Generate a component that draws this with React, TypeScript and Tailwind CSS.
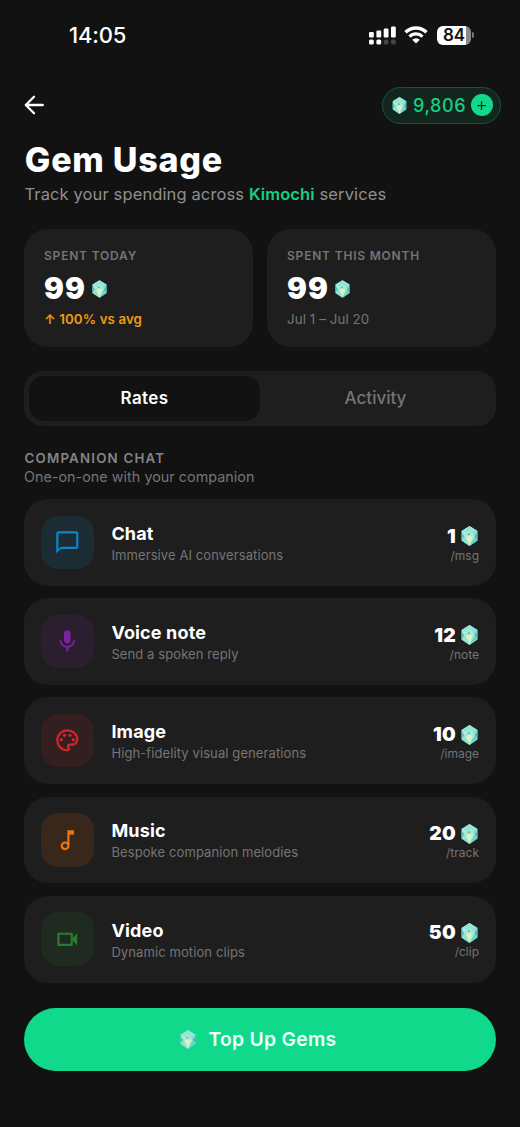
import React from 'react';
import {
  MdAdd,
  MdChatBubbleOutline,
  MdMic,
  MdOutlineMusicNote,
  MdOutlinePalette,
  MdOutlineVideocam,
} from 'react-icons/md';

const rates = [
  { name: 'Chat', desc: 'Immersive AI conversations', price: 1, unit: '/msg', icon: MdChatBubbleOutline, tile: 'bg-[#1b2c35] text-[#0d86c8]' },
  { name: 'Voice note', desc: 'Send a spoken reply', price: 12, unit: '/note', icon: MdMic, tile: 'bg-[#2a1e2f] text-[#7d20a3]' },
  { name: 'Image', desc: 'High-fidelity visual generations', price: 10, unit: '/image', icon: MdOutlinePalette, tile: 'bg-[#341f20] text-[#d0272c]' },
  { name: 'Music', desc: 'Bespoke companion melodies', price: 20, unit: '/track', icon: MdOutlineMusicNote, tile: 'bg-[#38271a] text-[#ec7509]' },
  { name: 'Video', desc: 'Dynamic motion clips', price: 50, unit: '/clip', icon: MdOutlineVideocam, tile: 'bg-[#1f2a20] text-[#2b7a30]' },
];

function Gem({ className }: { className: string }) {
  return (
    <svg viewBox="0 0 34 40" className={`shrink-0 ${className}`}>
      <path d="M17 0 33 10V29L17 40 1 29V10Z" fill="#7fdccd" />
      <path d="M17 0 33 10 24 14 17 8 10 14 1 10Z" fill="#93e6d8" />
      <path d="M1 10 10 14 7 21Z" fill="#b3efe3" />
      <path d="M33 10 24 14 27 21Z" fill="#7fe0da" />
      <path d="M1 13 7 21 1 27Z" fill="#5fbfb3" />
      <path d="M33 13 27 21 33 27Z" fill="#4fb0b0" />
      <path d="M1 29 7 21 17 40Z" fill="#8ce5d1" />
      <path d="M33 29 27 21 17 40Z" fill="#6ad4c6" />
      <path d="M17 8 24 14 27 21 17 40 7 21 10 14Z" fill="#a6e9d5" />
      <path d="M10 23 17 19 23 23 17 38Z" fill="#def0c4" />
      <path d="M13 18 16 13 18 18Z" fill="#6fa69a" />
    </svg>
  );
}

function StatusBar() {
  return (
    <div className="flex h-[70px] items-center justify-between pl-[69px] pr-[46px]">
      <span className="text-[22px] font-medium tracking-[-0.2px]">14:05</span>
      <div className="flex items-center gap-2">
        <svg width="27" height="19" viewBox="0 0 27 19" fill="#fff">
          <rect x="0" y="6" width="4.8" height="5.5" rx="1.2" />
          <rect x="7.4" y="4.5" width="4.8" height="7" rx="1.2" />
          <rect x="14.7" y="2.5" width="4.8" height="9" rx="1.2" />
          <rect x="22" y="0.5" width="4.8" height="11" rx="1.2" />
          <rect x="0" y="13.5" width="4.8" height="5" rx="1.5" />
          <rect x="7.4" y="13.5" width="4.8" height="5" rx="1.5" />
          <rect x="14.7" y="13.5" width="4.8" height="5" rx="1.5" fill="#464646" />
          <rect x="22" y="13.5" width="4.8" height="5" rx="1.5" fill="#464646" />
        </svg>
        <svg width="24" height="18" viewBox="0 0 24 18" fill="none" stroke="#fff">
          <path d="M1.5 6.3a15 15 0 0 1 21 0" strokeWidth="3.4" />
          <path d="M5.5 10.6a9.3 9.3 0 0 1 13 0" strokeWidth="3.2" />
          <path d="M12 17.6 8.2 13.8a5.5 5.5 0 0 1 7.6 0Z" fill="#fff" stroke="none" />
        </svg>
        <div className="ml-[1px] flex items-center gap-[1px]">
          <div className="flex h-[19px] w-[34px] items-center justify-center rounded-[6px] bg-[linear-gradient(90deg,#fff_84%,#8a8a8a_84%)] text-[17px] font-semibold leading-none text-[#121212]">
            84
          </div>
          <div className="h-[6px] w-[2px] rounded-r-full bg-[#777]" />
        </div>
      </div>
    </div>
  );
}

function Header() {
  return (
    <div className="mt-[16.5px] flex h-[37px] items-center justify-between pl-6 pr-[19.5px]">
      <svg width="21" height="20" viewBox="0 0 21 20" fill="none" stroke="#fff" strokeWidth="2.3" strokeLinecap="round" strokeLinejoin="round">
        <path d="M18.8 10H1.8M10 1.8 1.8 10l8.2 8.2" />
      </svg>
      <div className="flex h-[37px] w-[118.5px] items-center rounded-full border-[1.5px] border-[#14553d] bg-[#12261e] pl-[9px] pr-[7px]">
        <Gem className="h-[17px] w-[15px]" />
        <span className="ml-[6px] flex-1 text-[18px] font-medium tracking-[0.6px] text-[#17cf83]">9,806</span>
        <span className="flex size-[22px] items-center justify-center rounded-full bg-[#10d98b]">
          <MdAdd className="size-[15px] text-[#123325]" />
        </span>
      </div>
    </div>
  );
}

export default function App() {
  return (
    <div className="h-[1127px] w-[520px] overflow-hidden bg-[#121212] font-[Inter,sans-serif] text-white">
      <StatusBar />
      <Header />

      <main className="px-6">
        <h1 className="mt-[15.5px] pl-[0.8px] text-[34px] font-extrabold leading-[42px] tracking-[0.75px]">Gem Usage</h1>
        <p className="mt-[1.5px] pl-[0.5px] text-[16.5px] leading-[22px] tracking-[0.12px] text-[#8f8f8f]">
          Track your spending across <span className="font-semibold text-[#17cf83]">Kimochi</span> services
        </p>

        {/* Spending summary */}
        <div className="mt-6 grid grid-cols-2 gap-[14px]">
          <div className="h-[118.5px] rounded-3xl bg-[#1e1e1e] px-5 pt-[19px]">
            <div className="text-[12px] font-semibold leading-4 tracking-[0.8px] text-[#757575]">SPENT TODAY</div>
            <div className="mt-2 flex h-[35px] items-center gap-[6px] text-[29.5px] font-black leading-none tracking-[1px]">
              99 <Gem className="h-[18px] w-[15px]" />
            </div>
            <div className="mt-1 text-[13.3px] font-semibold leading-4 tracking-[0.1px] text-[#f09a12]">↑ 100% vs avg</div>
          </div>
          <div className="h-[118.5px] rounded-3xl bg-[#1e1e1e] px-5 pt-[19px]">
            <div className="text-[12px] font-semibold leading-4 tracking-[0.8px] text-[#757575]">SPENT THIS MONTH</div>
            <div className="mt-2 flex h-[35px] items-center gap-[6px] text-[29.5px] font-black leading-none tracking-[1px]">
              99 <Gem className="h-[18px] w-[15px]" />
            </div>
            <div className="mt-1 text-[13.3px] leading-4 tracking-[0.1px] text-[#757575]">Jul 1 – Jul 20</div>
          </div>
        </div>

        {/* Tabs */}
        <div className="mt-6 grid h-[54.5px] grid-cols-2 rounded-[19px] bg-[#1e1e1e] p-[5px] text-[17px]">
          <button className="rounded-[15px] bg-[#121212] pt-[1px] font-semibold tracking-[0.4px]">Rates</button>
          <button className="pt-[1px] font-medium text-[#757575]">Activity</button>
        </div>

        {/* Rates list */}
        <h2 className="mt-6 pl-[0.5px] text-[13.3px] font-semibold leading-4 tracking-[1.2px] text-[#858585]">COMPANION CHAT</h2>
        <p className="mt-[2px] text-[14.3px] leading-[18px] tracking-[0.05px] text-[#757575]">One-on-one with your companion</p>

        <div className="mt-[13.5px] flex flex-col gap-[12.4px]">
          {rates.map(({ name, desc, price, unit, icon: Icon, tile }) => (
            <div key={name} className="flex h-[86.8px] items-center rounded-3xl bg-[#1e1e1e] px-[17px]">
              <div className={`flex size-[53.4px] items-center justify-center rounded-[17px] ${tile}`}>
                <Icon className="size-[26.6px]" />
              </div>
              <div className="ml-[17px] flex-1 pt-[2px]">
                <div className="text-[18px] font-bold leading-[22px] tracking-[0.15px]">{name}</div>
                <div className="mt-[1px] text-[13px] leading-[18px] tracking-[0.1px] text-[#757575]">{desc}</div>
              </div>
              <div className="flex flex-col items-end pt-[5px]">
                <div className="flex h-[22px] items-center gap-[5px] text-[19.3px] font-black leading-none tracking-[0.3px]">
                  {price} <Gem className="mr-[1px] h-5 w-[17px]" />
                </div>
                <div className="-mt-[0.8px] text-[12px] leading-[18px] text-[#757575]">{unit}</div>
              </div>
            </div>
          ))}
        </div>

        <button className="mt-[25.3px] flex h-[63px] w-full items-center justify-center rounded-full bg-[#10d98b] pr-[3px] pt-[1px] text-[19.3px] font-semibold tracking-[0.3px] text-[#effff8]">
          <Gem className="mr-3 h-[19px] w-4" />
          Top Up Gems
        </button>
      </main>
    </div>
  );
}
